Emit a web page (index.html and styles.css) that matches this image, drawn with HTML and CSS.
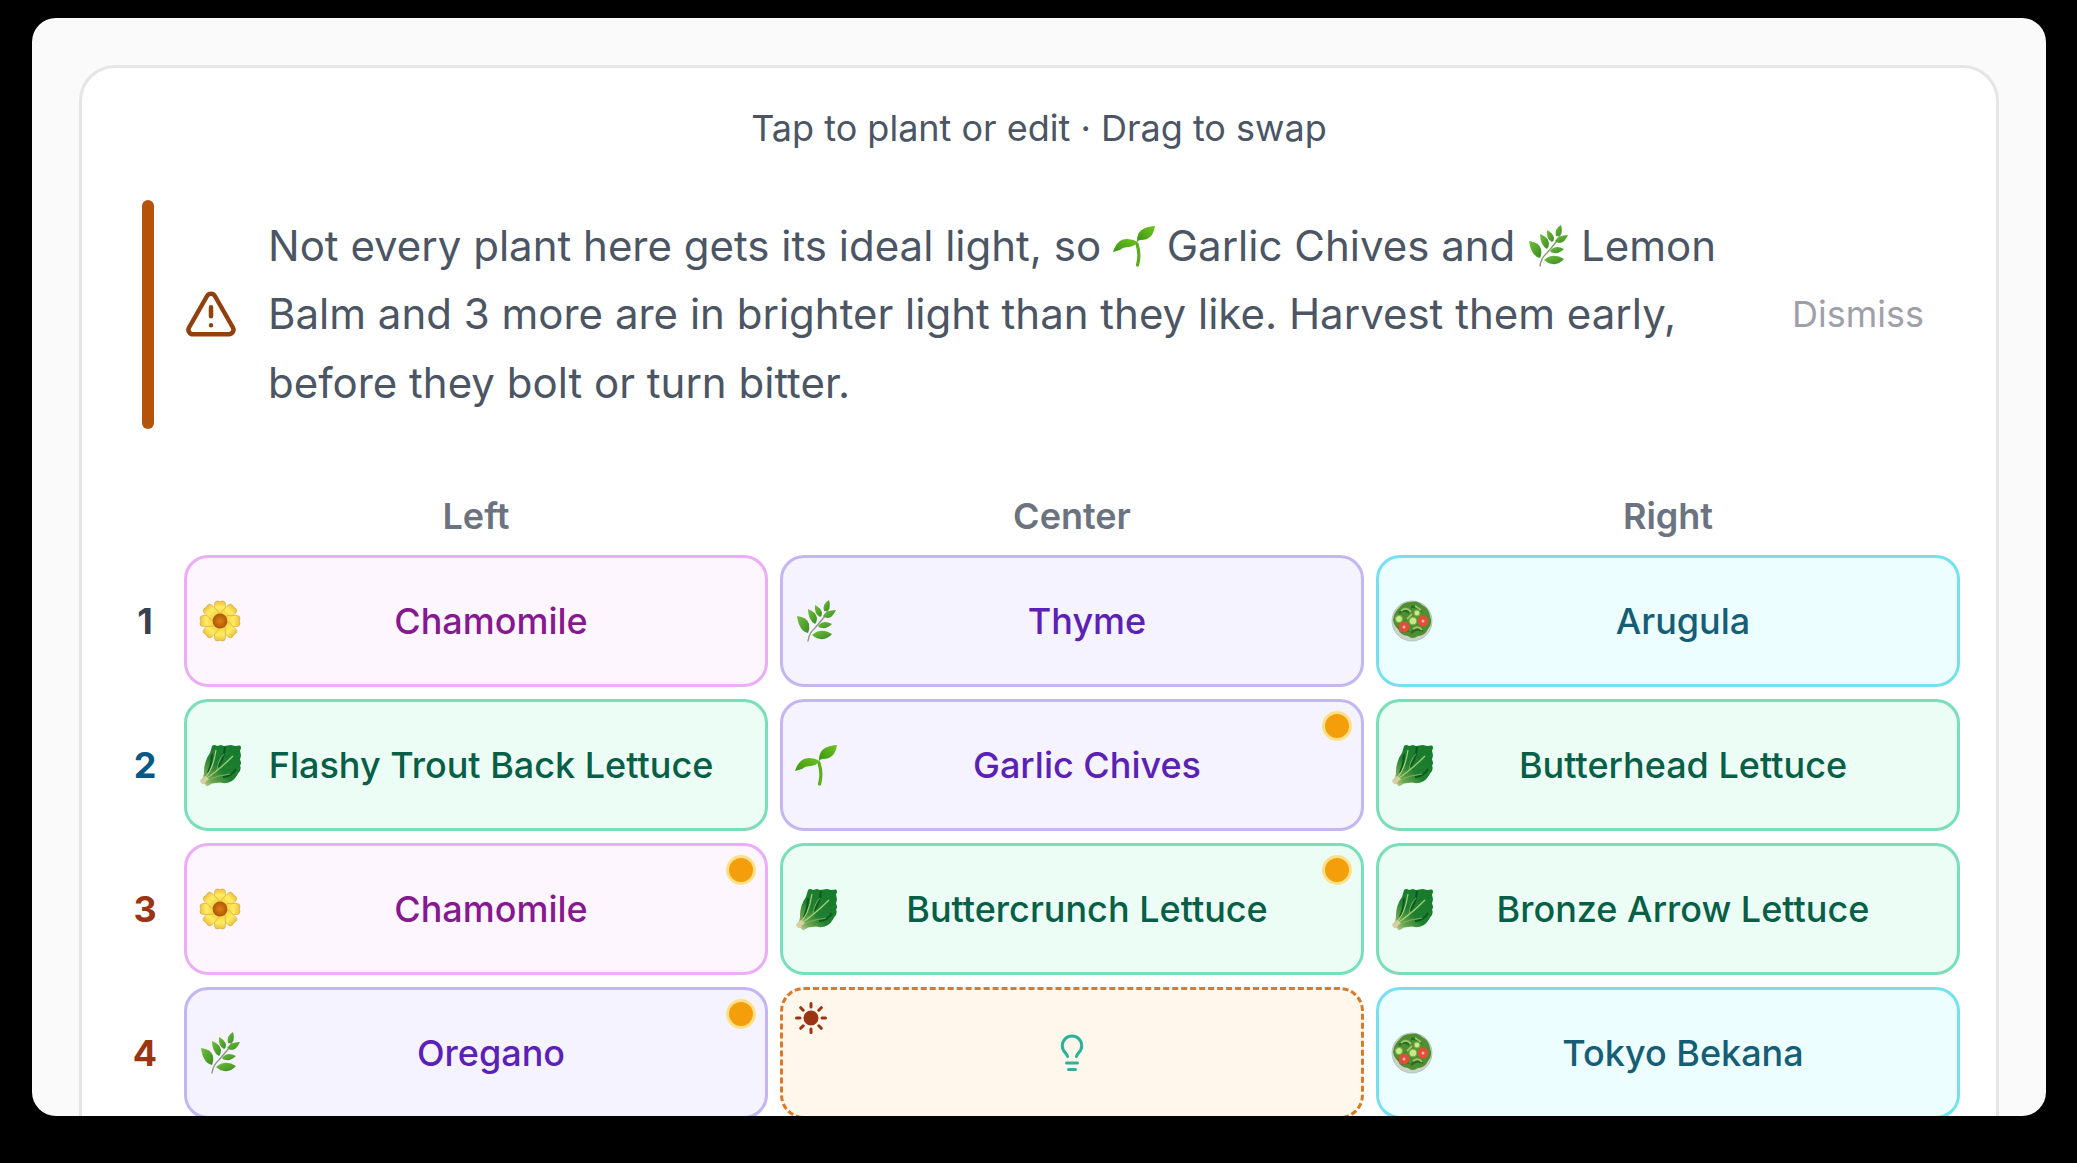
FILE: index.html
```html
<!DOCTYPE html>
<html lang="en">
  <head>
    <meta charset="UTF-8" />
    <meta name="viewport" content="width=device-width, initial-scale=1.0" />
    <title>Garden Bed Planner</title>
    <link rel="stylesheet" href="styles.css">
  </head>
  <body>
    <!-- plant icons, reused by the bed cells -->
    <svg class="sprite" aria-hidden="true">
      <defs>
        <radialGradient id="eye">
          <stop offset="0" stop-color="#de8210" />
          <stop offset="1" stop-color="#ad560b" />
        </radialGradient>
        <linearGradient id="petalFill" x1="0" y1="0" x2="0" y2="1">
          <stop offset="0" stop-color="#eec23a" />
          <stop offset="0.4" stop-color="#fdec62" />
          <stop offset="1" stop-color="#f3cd35" />
        </linearGradient>
        <linearGradient id="leafFill" x1="0" y1="0" x2="1" y2="1">
          <stop offset="0" stop-color="#71c13c" />
          <stop offset="1" stop-color="#3a8a22" />
        </linearGradient>
        <linearGradient id="sproutFill" x1="1" y1="0" x2="0" y2="1">
          <stop offset="0" stop-color="#6fc51e" />
          <stop offset="1" stop-color="#3c9312" />
        </linearGradient>
        <linearGradient id="lettuceFill" x1="1" y1="0" x2="0" y2="1">
          <stop offset="0" stop-color="#157a2c" />
          <stop offset="0.55" stop-color="#1f7f30" />
          <stop offset="0.8" stop-color="#6fa650" />
          <stop offset="1" stop-color="#d3dfa5" />
        </linearGradient>
      </defs>
      <symbol id="flower" viewBox="0 0 42 42">
        <g fill="url(#petalFill)" stroke="#cfa13a" stroke-width="0.6">
          <path id="petal" d="M18.500 17l-2.800-3-.2-10q.3-3 3-3l2.500.7 2.500-.7q2.700 0 3 3l-.2 10-2.800 3z" />
          <use href="#petal" transform="rotate(45 21 21)" />
          <use href="#petal" transform="rotate(90 21 21)" />
          <use href="#petal" transform="rotate(135 21 21)" />
          <use href="#petal" transform="rotate(180 21 21)" />
          <use href="#petal" transform="rotate(225 21 21)" />
          <use href="#petal" transform="rotate(270 21 21)" />
          <use href="#petal" transform="rotate(315 21 21)" />
        </g>
        <circle cx="21" cy="21" r="7.400" fill="url(#eye)" />
      </symbol>
      <symbol id="herb" viewBox="0 0 42 42">
        <path d="M13 41q1-8 7-13l10-12 4-8" fill="none" stroke="#8a9b78" stroke-width="1.400" stroke-linecap="round" />
        <g fill="url(#leafFill)">
          <path d="M2 16q10 1 12 8 1 5-1 9-9-2-11-17z" />
          <path d="M13 9q8 3 9 9 0 4-2 6-7-4-7-15z" />
          <path d="M20 5q6 3 7 8 0 3-2 4-6-3-5-12z" />
          <path d="M34 0q2 6-1 10-2 2-4 1-2-7 5-11z" />
          <path d="M41 10q-3 7-8 8-3 0-5-2 3-6 13-6z" />
          <path d="M37 24q-5 5-10 4-3 0-4-2 5-7 14-2z" />
          <path d="M37 34q-5 6-12 5-5-1-8-4 9-8 20-1z" />
        </g>
      </symbol>
      <symbol id="sprout" viewBox="0 0 42 42">
        <path d="M24.500 40q3-10-.5-21" fill="none" stroke="#5cae1d" stroke-width="3.200" stroke-linecap="round" />
        <path d="M24 17q-1-15 18-16-2 14-14 14-3 0-4 2z" fill="url(#sproutFill)" />
        <path d="M25 17q-3 4-9 5-6 0-9 3l-7 2q4-13 14-13 6 0 11 3z" fill="url(#sproutFill)" />
      </symbol>
      <symbol id="lettuce" viewBox="0 0 42 42">
        <path d="M2 36q3-3 3-8 0-11 6-19l2-7q2-2 5 0l4-1 3 1 7-1 4 1 5-.5q2 2 0 5l1 5-1 4q2 4 0 6 2 4-2 8-3 6-7 8-5 3-11 1l-8 1-5 3z" fill="url(#lettuceFill)" />
        <path d="M26 3q-1 12-7 20M13 10q0 10-4 19M24 33q8 0 13-8" fill="none" stroke="#0b5a20" stroke-width="2" />
        <path d="M4 36Q14 27 17 6M5 36q14-9 29-24" fill="none" stroke="#a9cf7c" stroke-width="1.200" />
        <path d="M6 37q13-6 25-7M18 26q1-10 7-16" fill="none" stroke="#8dbd66" stroke-width="0.8" />
        <path d="M1 36q3-2 5-4l4 3q-3 2-5 5-3 1-4-4z" fill="#d8cfa2" />
      </symbol>
      <symbol id="salad" viewBox="0 0 42 42">
        <circle cx="21" cy="21" r="20" fill="#cbd3c8" stroke="#b3bbb3" stroke-width="0.8" />
        <path d="M2 20q1-8 6-12 4-6 11-6 8-2 12 3 7 3 8 11 3 8-2 13-3 7-10 7-6 4-10 0-8-1-10-7-4-3-5-9z" fill="#4f8f33" />
        <path d="M8 13q6-5 10 0M20 7q7-1 10 5M7 28q6-4 10 4M20 33q6-6 12-2M30 24q4 2 6-2" fill="none" stroke="#2f6b20" stroke-width="2.500" />
        <path d="M10 11q5-5 10 1M22 29q5-4 9 1M24 6l6 4M16 19l5-5" fill="none" stroke="#9ac76c" stroke-width="1.800" />
        <g fill="#c9e88b" stroke="#79ab45" stroke-width="1.200">
          <circle cx="8" cy="19" r="3.500" />
          <circle cx="22" cy="21" r="3.800" />
          <circle cx="26" cy="13" r="3" />
        </g>
        <circle cx="13" cy="27" r="5.500" fill="#dd5039" />
        <circle cx="32" cy="21" r="5.500" fill="#dd5039" />
        <circle cx="13" cy="27" r="1.500" fill="#f6b39c" />
        <circle cx="32" cy="21" r="1.500" fill="#f6b39c" />
      </symbol>
    </svg>

    <div class="screen">
      <main class="card">
        <p class="hint">Tap to plant or edit · Drag to swap</p>

        <section class="notice">
          <svg class="notice-icon" viewBox="0 0 24 24" aria-hidden="true">
            <path d="m21.730 18-8-14a2 2 0 0 0-3.480 0l-8 14A2 2 0 0 0 4 21h16a2 2 0 0 0 1.730-3z" />
            <path d="M12 9v4M12 17h.01" />
          </svg>
          <p class="notice-text">
            Not every plant here gets its ideal light, so
            <svg class="emoji"><use href="#sprout" /></svg> Garlic Chives and
            <svg class="emoji"><use href="#herb" /></svg> Lemon Balm and 3 more
            are in brighter light than they like. Harvest them early, before
            they bolt or turn bitter.
          </p>
          <button class="dismiss">Dismiss</button>
        </section>

        <div class="bed">
          <span></span>
          <span class="col-label">Left</span>
          <span class="col-label">Center</span>
          <span class="col-label">Right</span>

          <span class="row-label">1</span>
          <button class="cell flower"><svg class="plant"><use href="#flower" /></svg><span class="name">Chamomile</span></button>
          <button class="cell herb"><svg class="plant"><use href="#herb" /></svg><span class="name">Thyme</span></button>
          <button class="cell salad"><svg class="plant"><use href="#salad" /></svg><span class="name">Arugula</span></button>

          <span class="row-label cool">2</span>
          <button class="cell lettuce"><svg class="plant"><use href="#lettuce" /></svg><span class="name">Flashy Trout Back Lettuce</span></button>
          <button class="cell herb"><svg class="plant"><use href="#sprout" /></svg><span class="name">Garlic Chives</span><i class="dot"></i></button>
          <button class="cell lettuce"><svg class="plant"><use href="#lettuce" /></svg><span class="name">Butterhead Lettuce</span></button>

          <span class="row-label warm">3</span>
          <button class="cell flower"><svg class="plant"><use href="#flower" /></svg><span class="name">Chamomile</span><i class="dot"></i></button>
          <button class="cell lettuce"><svg class="plant"><use href="#lettuce" /></svg><span class="name">Buttercrunch Lettuce</span><i class="dot"></i></button>
          <button class="cell lettuce"><svg class="plant"><use href="#lettuce" /></svg><span class="name">Bronze Arrow Lettuce</span></button>

          <span class="row-label warm">4</span>
          <button class="cell herb"><svg class="plant"><use href="#herb" /></svg><span class="name">Oregano</span><i class="dot"></i></button>
          <button class="cell empty" aria-label="Plant something here">
            <svg class="sun" viewBox="0 0 32 32" aria-hidden="true">
              <circle cx="16" cy="16" r="6" />
              <path d="M16 1.500v3.500M16 27v3.500M1.500 16h3.500M27 16h3.500M5.700 5.700l2.500 2.500M23.800 23.800l2.500 2.500M5.700 26.300l2.500-2.500M23.800 8.200l2.500-2.500" />
            </svg>
            <svg class="bulb" viewBox="0 0 24 38" aria-hidden="true">
              <path d="M7.500 22.500q-.5-2-2.300-3.900A9.700 9.700 0 1 1 18.800 18.600q-1.800 1.900-2.300 3.900M6.500 29h11M8.500 35.500h7" />
            </svg>
          </button>
          <button class="cell salad"><svg class="plant"><use href="#salad" /></svg><span class="name">Tokyo Bekana</span></button>
        </div>
      </main>
    </div>
  </body>
</html>
```
FILE: styles.css
```css
* {
  box-sizing: border-box;
}

body {
  margin: 0;
  padding: 18px 31px 47px 32px;
  height: 100vh;
  background: #000;
  font-family: Inter, "Liberation Sans", sans-serif;
  font-size: 36px;
  line-height: 48px;
  color: #4b5563;
}

button {
  font: inherit;
  cursor: pointer;
}

p {
  margin: 0;
}

.sprite {
  position: absolute;
  width: 0;
  height: 0;
}

.screen {
  height: 100%;
  padding: 47px;
  overflow: hidden;
  background: #fafafa;
  border-radius: 24px;
}

.card {
  padding: 36px;
  background: #fff;
  border: 3px solid #e5e5e5;
  border-radius: 36px;
}

.hint {
  text-align: center;
}

/* light warning */
.notice {
  display: flex;
  align-items: center;
  gap: 30px;
  margin: 48px 24px 60px;
  padding: 12px 12px 12px 42px;
  position: relative;
}

.notice::before {
  content: "";
  position: absolute;
  left: 0;
  top: 0;
  bottom: 0;
  width: 12px;
  border-radius: 6px;
  background: #b45309;
}

.notice-icon {
  flex: none;
  width: 54px;
  height: 54px;
  fill: none;
  stroke: #92400e;
  stroke-width: 2;
  stroke-linecap: round;
  stroke-linejoin: round;
}

.notice-text {
  flex: 1;
  font-size: 42px;
  line-height: 1.625;
}

.emoji {
  width: 42px;
  height: 42px;
  vertical-align: -6px;
}

.dismiss {
  padding: 0 0 0 36px;
  border: none;
  background: none;
  color: #9f9fa9;
}

/* planting grid */
.bed {
  display: grid;
  grid-template-columns: 54px repeat(3, 1fr);
  gap: 12px;
}

.col-label {
  line-height: 54px;
  font-weight: 600;
  text-align: center;
  color: #6b7280;
}

.row-label {
  align-self: center;
  font-weight: 700;
  text-align: center;
  color: #374151;
}

.row-label.cool {
  color: #075985;
}

.row-label.warm {
  color: #9a3412;
}

.cell {
  display: flex;
  align-items: center;
  height: 132px;
  padding: 0 24px 0 12px;
  position: relative;
  border: 3px solid;
  border-radius: 24px;
}

.plant {
  flex: none;
  width: 42px;
  height: 42px;
}

.name {
  flex: 1;
  font-weight: 500;
}

.flower {
  background: #fdf6ff;
  border-color: #ebaef6;
  color: #86198f;
}

.herb {
  background: #f5f3ff;
  border-color: #c3b6f3;
  color: #5b21b6;
}

.salad {
  background: #ecfeff;
  border-color: #74e0f0;
  color: #155e75;
}

.lettuce {
  background: #ecfdf5;
  border-color: #78dfb8;
  color: #065f46;
}

.empty {
  justify-content: center;
  padding: 0;
  background: #fff7eb;
  border: 3px dashed #d97a2b;
}

.dot {
  position: absolute;
  top: 9px;
  right: 9px;
  width: 30px;
  height: 30px;
  border: 3px solid #fde08a;
  border-radius: 50%;
  background: #f59e0b;
}

.sun {
  position: absolute;
  top: 12px;
  left: 12px;
  width: 32px;
  height: 32px;
  fill: #9a3412;
  stroke: #9a3412;
  stroke-width: 3;
  stroke-linecap: round;
}

.bulb {
  width: 24px;
  height: 38px;
  overflow: visible;
  fill: none;
  stroke: #2bb39a;
  stroke-width: 3;
  stroke-linecap: round;
}
```
